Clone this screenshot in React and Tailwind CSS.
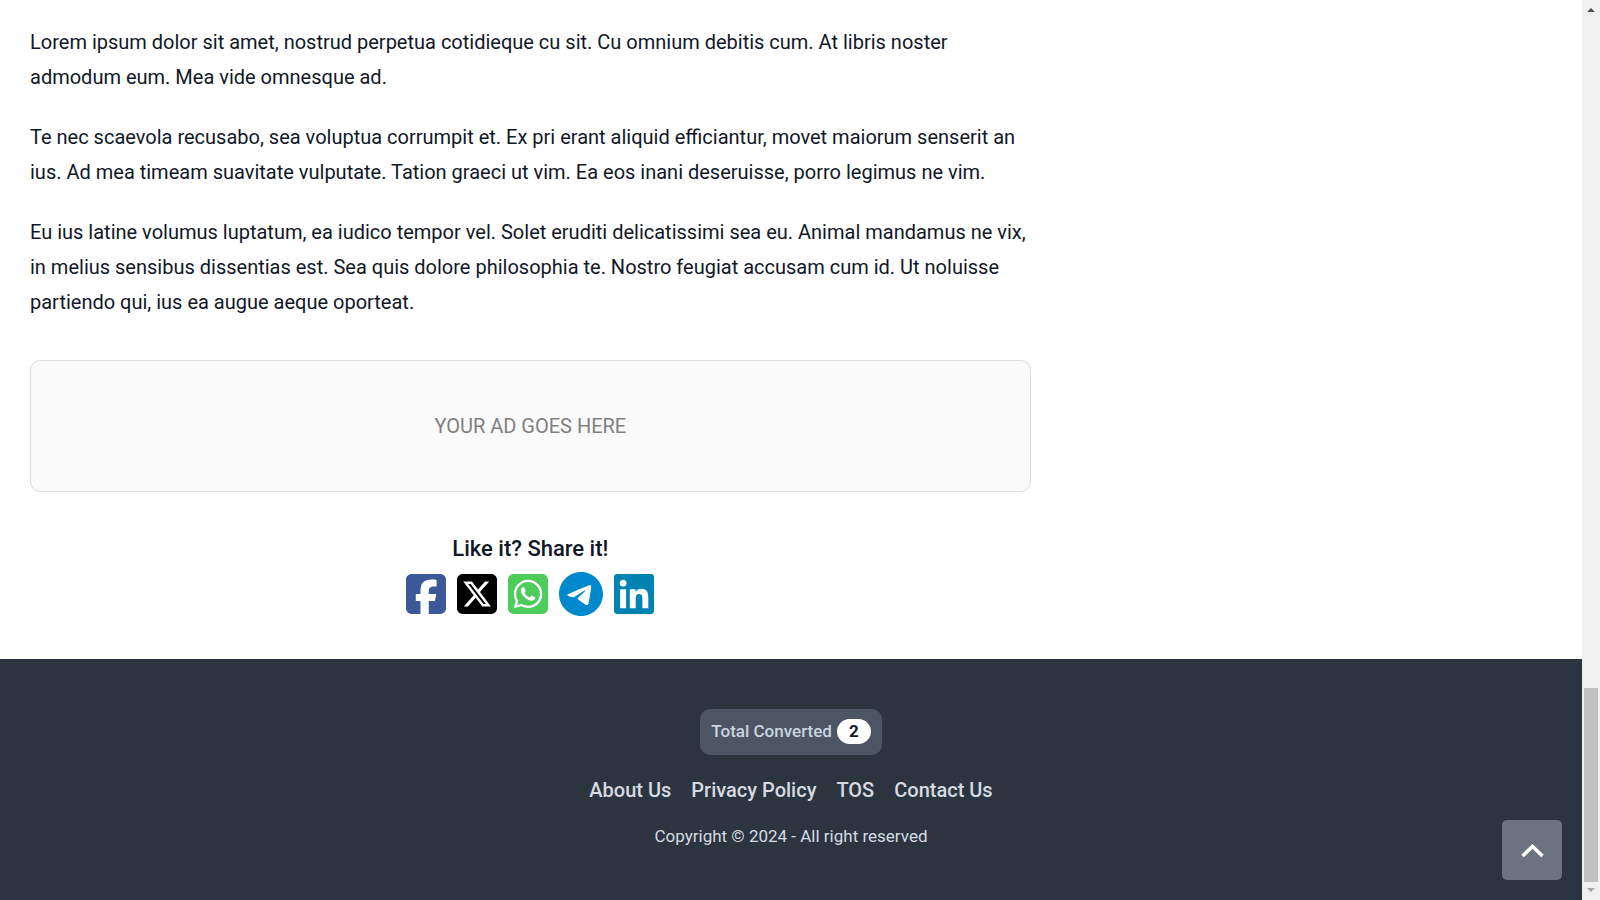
import React from 'react';
import {
  FaSquareFacebook,
  FaSquareXTwitter,
  FaSquareWhatsapp,
  FaTelegram,
  FaLinkedin,
} from 'react-icons/fa6';

const paragraphs = [
  'Lorem ipsum dolor sit amet, nostrud perpetua cotidieque cu sit. Cu omnium debitis cum. At libris noster admodum eum. Mea vide omnesque ad.',
  'Te nec scaevola recusabo, sea voluptua corrumpit et. Ex pri erant aliquid efficiantur, movet maiorum senserit an ius. Ad mea timeam suavitate vulputate. Tation graeci ut vim. Ea eos inani deseruisse, porro legimus ne vim.',
  'Eu ius latine volumus luptatum, ea iudico tempor vel. Solet eruditi delicatissimi sea eu. Animal mandamus ne vix, in melius sensibus dissentias est. Sea quis dolore philosophia te. Nostro feugiat accusam cum id. Ut noluisse partiendo qui, ius ea augue aeque oporteat.',
];

const shareLinks = [
  { label: 'Facebook', icon: FaSquareFacebook, className: 'h-[46px] w-10 text-[#3b5998]' },
  { label: 'X', icon: FaSquareXTwitter, className: 'h-[46px] w-10 text-black' },
  { label: 'WhatsApp', icon: FaSquareWhatsapp, className: 'h-[46px] w-10 text-[#4dcb5b]' },
  { label: 'Telegram', icon: FaTelegram, className: 'h-[46px] w-11 text-[#0088cc]' },
  { label: 'LinkedIn', icon: FaLinkedin, className: 'h-[46px] w-10 text-[#0083b0]' },
];

const footerLinks = ['About Us', 'Privacy Policy', 'TOS', 'Contact Us'];

const ShareBar = () => (
  <section className="mt-[39px] flex flex-col items-center">
    <h2 className="text-[22px] leading-[35px] font-medium">Like it? Share it!</h2>
    <div className="mt-[5px] flex items-center gap-[11px]">
      {shareLinks.map(({ label, icon: Icon, className }) => (
        <a key={label} href="#" aria-label={label}>
          <Icon className={className} />
        </a>
      ))}
    </div>
  </section>
);

const Footer = () => (
  <footer className="relative flex flex-1 flex-col items-center bg-[#2c3440] pt-[50px] text-[#d6dbe1]">
    <div className="flex items-start gap-[5px] rounded-[10px] bg-[#4b5563] px-[11px] pt-[10px] pb-[11px] text-[17px] leading-[25px] font-medium text-[#cbd5e1]">
      <span>Total Converted</span>
      <span className="rounded-full bg-white px-3 font-bold text-gray-900">2</span>
    </div>
    <nav className="mt-[18px] flex gap-5 text-[20px] leading-[35px] font-medium">
      {footerLinks.map((label) => (
        <a key={label} href="#">{label}</a>
      ))}
    </nav>
    <p className="mt-[11px] text-[17px] leading-[35px]">Copyright © 2024 - All right reserved</p>

    <button
      aria-label="Back to top"
      className="absolute right-5 bottom-5 flex h-[60px] w-[60px] items-center justify-center rounded-[5px] bg-[#6b7280] text-white"
    >
      <svg viewBox="0 0 24 16" className="h-4 w-6" fill="none" stroke="currentColor" strokeWidth="3.6">
        <path d="M2.5 14 L12.5 4.5 L22.5 14" />
      </svg>
    </button>
  </footer>
);

const Scrollbar = () => (
  <div className="flex h-screen w-[18px] flex-col items-center bg-[#f0f0f0]">
    <svg viewBox="0 0 18 18" className="h-[18px] w-[18px] shrink-0 text-[#505050]" fill="currentColor">
      <path d="M5 12 L9 8 L13 12 Z" />
    </svg>
    <div className="grow-[670]" />
    <div className="w-[14px] grow-[194] bg-[#c1c1c1]" />
    <svg viewBox="0 0 18 18" className="h-[18px] w-[18px] shrink-0 text-[#a3a3a3]" fill="currentColor">
      <path d="M5 6 L13 6 L9 10 Z" />
    </svg>
  </div>
);

export default function App() {
  return (
    <div className="flex h-screen bg-white font-[Roboto,sans-serif] text-gray-900">
      <div className="flex min-w-0 flex-1 flex-col">
        <main className="w-2/3 pt-[25px] pr-6 pb-[42px] pl-[30px]">
          <article className="space-y-[25px] text-[20px] leading-[35px]">
            {paragraphs.map((text) => (
              <p key={text}>{text}</p>
            ))}
          </article>
          <div className="mt-10 flex h-[132px] items-center justify-center rounded-[10px] border border-[#dcdddf] bg-[#fafafa] text-[20px] text-[#808080]">
            YOUR AD GOES HERE
          </div>
          <ShareBar />
        </main>
        <Footer />
      </div>
      <Scrollbar />
    </div>
  );
}
